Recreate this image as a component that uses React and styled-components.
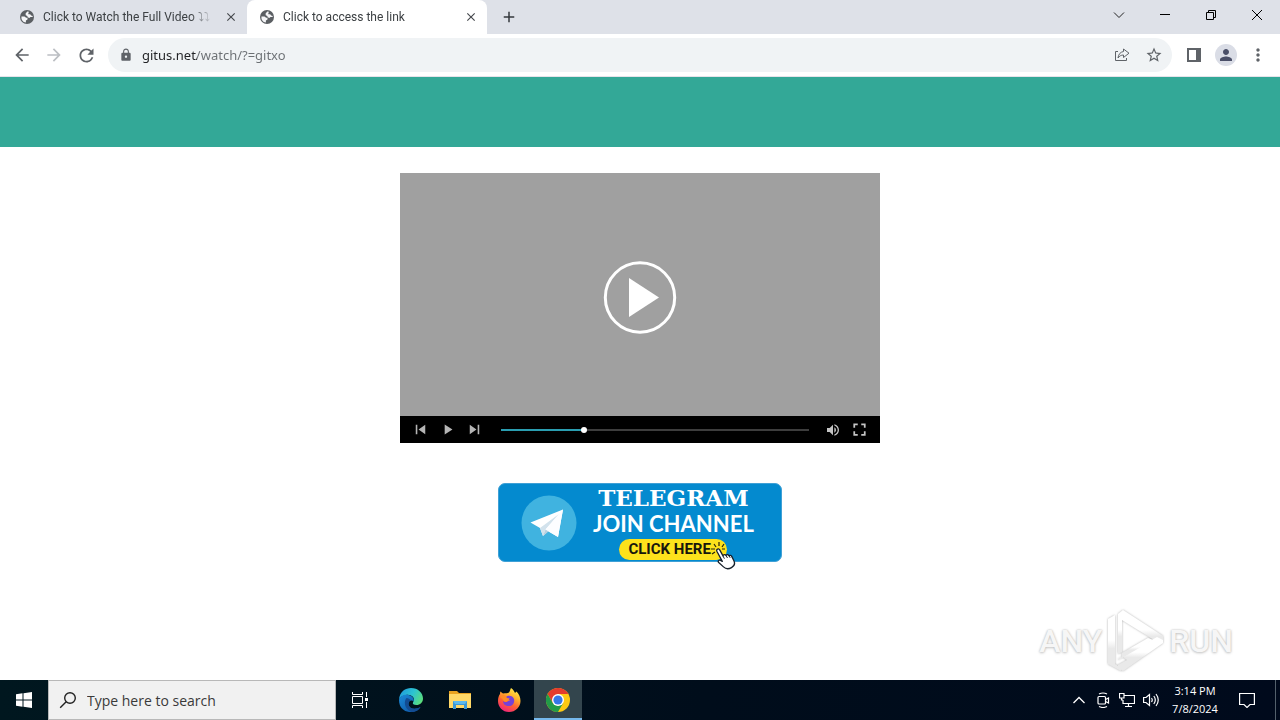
import React, { useState } from "react";
import styled, { createGlobalStyle } from "styled-components";
import {
  MdArrowBack,
  MdArrowForward,
  MdRefresh,
  MdLock,
  MdStarBorder,
  MdMoreVert,
  MdPerson,
  MdClose,
  MdAdd,
  MdSkipPrevious,
  MdSkipNext,
  MdPlayArrow,
  MdVolumeUp,
  MdFullscreen,
} from "react-icons/md";

const GlobalStyle = createGlobalStyle`
  * { box-sizing: border-box; }
  body {
    margin: 0;
    background: #fff;
    font-family: "Noto Sans", "Open Sans", sans-serif;
  }
  button, input { font: inherit; color: inherit; }
  button { padding: 0; border: 0; background: none; cursor: pointer; }
  svg { display: block; flex: none; }
`;

const Desktop = styled.div`
  display: flex;
  flex-direction: column;
  min-height: 100vh;
`;

/* Browser window */
const TabStrip = styled.header`
  display: flex;
  height: 34px;
  padding-left: 7px;
  background: #dee1e8;
`;

const Tab = styled.div`
  display: flex;
  align-items: center;
  gap: 9px;
  flex: 0 1 240px;
  min-width: 0;
  padding: 0 8px 0 13px;
  border-radius: 8px 8px 0 0;
  background: ${(p) => (p.$active ? "#fff" : "transparent")};
  color: #3c4043;
`;

const TabTitle = styled.button`
  flex: 1;
  min-width: 0;
  overflow: hidden;
  white-space: nowrap;
  text-align: left;
  font-family: Roboto, sans-serif;
  font-size: 12px;
  line-height: 18px;
  mask-image: linear-gradient(to right, #000 86%, transparent);
`;

const IconButton = styled.button`
  display: flex;
  align-items: center;
  justify-content: center;
  flex: none;
  width: ${(p) => p.$w || 32}px;
  height: ${(p) => p.$h || 32}px;
  color: ${(p) => p.$color || "#5f6368"};
  background: ${(p) => p.$bg || "transparent"};
`;

const NewTab = styled(IconButton)`
  margin-left: 6px;
`;

const WindowControls = styled.div`
  display: flex;
  margin-left: auto;
`;

const Toolbar = styled.nav`
  display: flex;
  align-items: center;
  padding: 4px 6px;
  border-bottom: 1px solid #e6e3ea;
  background: #fff;
`;

const AddressBar = styled.form`
  display: flex;
  align-items: center;
  flex: 1;
  min-width: 0;
  height: 34px;
  margin: 0 6px;
  padding: 0 2px 0 11px;
  border-radius: 17px;
  background: #f0f3f5;
`;

const AddressInput = styled.input`
  flex: 1;
  min-width: 0;
  margin-left: 9px;
  padding: 0;
  border: 0;
  outline: 0;
  font-size: 13px;
  line-height: 20px;
  color: #202124;
  background: linear-gradient(to right, #202124 55px, #6b6f73 55px);
  background-clip: text;
  -webkit-text-fill-color: transparent;
`;

const Avatar = styled.span`
  display: flex;
  align-items: center;
  justify-content: center;
  width: 22px;
  height: 22px;
  border-radius: 50%;
  background: #dadde6;
  color: #4a4f68;
`;

/* Web page */
const Page = styled.main`
  position: relative;
  flex: 1;
  display: flex;
  flex-direction: column;
  align-items: center;
`;

const Banner = styled.div`
  align-self: stretch;
  height: 70px;
  background: #33a897;
`;

const Player = styled.section`
  width: 480px;
  max-width: 100%;
  margin-top: 26px;
`;

const Screen = styled.button`
  display: flex;
  align-items: center;
  justify-content: center;
  width: 100%;
  height: 243px;
  padding-top: 6px;
  background: #a0a0a0;
`;

const Controls = styled.div`
  display: flex;
  align-items: center;
  height: 27px;
  padding: 0 7px;
  background: #000;
`;

const Seek = styled.input`
  flex: 1;
  min-width: 0;
  height: 8px;
  margin: 0 10px 0 13px;
  appearance: none;
  background: linear-gradient(
      to right,
      #2a9db0 ${(p) => p.value / 10}%,
      #3d3d3d ${(p) => p.value / 10}%
    )
    center / 100% 2px no-repeat;
  &::-webkit-slider-thumb {
    appearance: none;
    width: 6px;
    height: 6px;
    border-radius: 50%;
    background: #fff;
  }
`;

const JoinLink = styled.a`
  position: relative;
  display: flex;
  align-items: center;
  gap: 16px;
  width: 284px;
  height: 79px;
  margin-top: 40px;
  padding-left: 22px;
  border: 1px solid #3fa0d6;
  border-radius: 7px;
  background: #048acf;
  color: #fff;
  text-decoration: none;
`;

const JoinText = styled.span`
  display: flex;
  flex-direction: column;
  align-items: center;
  white-space: nowrap;
`;

const Brand = styled.span`
  font: 700 23px/26px "DejaVu Serif", serif;
`;

const Action = styled.span`
  font: 700 22px/26px Lato, sans-serif;
`;

const Pill = styled.span`
  width: 108px;
  height: 21px;
  margin-top: 2px;
  padding-left: 9px;
  border-radius: 11px;
  background: #fde21c;
  color: #17170c;
  font: 700 15px/21px Roboto, sans-serif;
`;

const Pointer = styled.svg`
  position: absolute;
  right: 44px;
  bottom: -9px;
`;

const Watermark = styled.div`
  position: absolute;
  right: 47px;
  bottom: 7px;
  display: flex;
  align-items: center;
  gap: 4px;
  font: 500 32px/40px Roboto, sans-serif;
  color: #f6f6f6;
  text-shadow: 0 0 2px #bbb, 0 1px 3px #ccc;
`;

/* Taskbar */
const Taskbar = styled.footer`
  display: flex;
  height: 40px;
  background: linear-gradient(to right, #00171f, #000d1b 55%, #000a1c);
  color: #fff;
`;

const SearchBox = styled.label`
  display: flex;
  align-items: center;
  gap: 10px;
  flex: 0 1 288px;
  min-width: 0;
  padding-left: 10px;
  border: 1px solid #b8b8b8;
  background: #f1f1f1;
  color: #222;
`;

const SearchInput = styled.input`
  flex: 1;
  min-width: 0;
  padding: 2px 0 0;
  border: 0;
  outline: 0;
  background: none;
  font-family: "Open Sans", sans-serif;
  font-size: 14px;
  line-height: 20px;
  &::placeholder { color: #3a3a3a; opacity: 1; }
`;

const Apps = styled.div`
  display: flex;
  gap: 1px;
  margin-left: 3px;
`;

const AppButton = styled(IconButton)`
  border-bottom: 2px solid ${(p) => (p.$active ? "#76b9ed" : "transparent")};
  padding-top: 2px;
  background: ${(p) => (p.$active ? "#33454d" : "transparent")};
`;

const Tray = styled.div`
  display: flex;
  margin-left: auto;
  padding-right: 4px;
`;

const Clock = styled.button`
  width: 64px;
  font-family: "Open Sans", sans-serif;
  font-size: 11px;
  line-height: 18px;
  white-space: nowrap;
`;

const ShowDesktop = styled.button`
  height: 40px;
  width: 1px;
  margin-left: 8px;
  background: #53606b;
`;

const Line = ({ size = 16, w = 1, children, ...rest }) => (
  <svg width={size} height={size} viewBox={`0 0 ${size} ${size}`} fill="none" stroke="currentColor" strokeWidth={w} {...rest}>
    {children}
  </svg>
);

const Globe = () => (
  <svg width="14" height="14" viewBox="0 0 14 14" aria-hidden="true">
    <circle cx="7" cy="7" r="7" fill="#5b5f63" />
    <path d="M1.4 6.4h3.1l1.6 1.3h1.4v1.7L5.9 10.5v2.1A5.8 5.8 0 0 1 1.4 6.4Z" fill="#f4f5f7" />
    <path d="M7.3 1.5 5.6 3.6l.1 1.7 1.6.6.4 1.4 1.6.6 1.2-1h2.1l.1-1-1.6-.3-.9-1.4-1.8.1-.1-1 .7-1.6Z" fill="#f4f5f7" />
  </svg>
);

const tabs = ["Click to Watch the Full Video ⤵⤵", "Click to access the link"];

function BrowserTab({ title, active }) {
  return (
    <Tab $active={active}>
      <Globe />
      <TabTitle role="tab" aria-selected={active}>{title}</TabTitle>
      <IconButton $w={16} $h={16} $color="#45484d" aria-label={`Close ${title}`}>
        <MdClose size={14} />
      </IconButton>
    </Tab>
  );
}

const TelegramLogo = () => (
  <svg width="56" height="56" viewBox="0 0 56 56" aria-hidden="true">
    <circle cx="28" cy="28" r="27.5" fill="#40b3e0" />
    <path d="M9.5 27.5 42 14.500 37 42 27 36.200 22 41 19 33Z" fill="#fff" />
    <path d="M19 33 38 19 24.500 34.500 22 41Z" fill="#d2e2ec" />
    <path d="M38 19 24.500 34.500 37 42 42 14.500Z" fill="#fcfdff" />
    <path d="M22 41 24.500 34.500 27.500 36.500Z" fill="#b5cfdf" />
  </svg>
);

const Hand = () => (
  <Pointer width="26" height="28" viewBox="0 0 26 28" aria-hidden="true">
    <path d="M3 2l2 3M8 0v4M13 2l-2 3M0 7h4M1 12l3-2M14 7h-3" stroke="#27220c" strokeWidth="1.200" />
    <path
      d="M6 7.500c1-1 2.100-.6 2.700.4l3.300 6c.5-1.500 2.200-1.600 3-.4.8-1.200 2.400-1 3 .2 1-.8 2.200-.3 2.700.7l2.200 4.300c1.400 3 .3 5.400-2.400 6.900-3.200 1.800-5.800 1.400-8-.7L7.700 20.500c-1.300-1.400.3-3 1.900-2.100l1.700 1L6 9.500c-.4-.8-.5-1.500 0-2Z"
      fill="#fff"
      stroke="#17202a"
      strokeWidth="1.300"
      strokeLinejoin="round"
    />
    <path d="m12 14 1.400 2.700M15 13.500l1.500 2.500M18 13.800l1.200 2" stroke="#17202a" />
  </Pointer>
);

const AnyRunMark = () => (
  <svg width="59" height="64" viewBox="0 0 59 64" aria-hidden="true" overflow="visible">
    <defs>
      <linearGradient id="mark" x2="0" y2="1">
        <stop offset=".45" stopColor="#fff" />
        <stop offset=".6" stopColor="#e9e9e9" />
      </linearGradient>
      <filter id="halo" x="-20%" y="-20%" width="140%" height="140%">
        <feDropShadow dx="0" dy="0" stdDeviation="1.300" floodColor="#999" floodOpacity=".8" />
      </filter>
    </defs>
    <g fill="url(#mark)" filter="url(#halo)">
      <path d="M2 10 9 6v49l6 4v3L2 55Z" />
      <path d="M12 5 17 1 57 27v5l-4 2-37-23v32l-4 2Z" />
      <path d="M12 50 51 28l6 3v3L17 62l-5-3v-3l9-5-4-3-5 3Z" />
      <path d="m16 44 26-15 5 2-31 18Z" />
    </g>
  </svg>
);

const EdgeIcon = () => (
  <svg width="24" height="24" viewBox="0 0 24 24" aria-hidden="true">
    <defs>
      <linearGradient id="edgeTop" x1="0" y1=".3" x2="1" y2=".7">
        <stop stopColor="#209ddb" />
        <stop offset=".5" stopColor="#2cc3d2" />
        <stop offset="1" stopColor="#5ddf78" />
      </linearGradient>
      <linearGradient id="edgeLow" x2="1" y2="1">
        <stop stopColor="#1b8ad8" />
        <stop offset="1" stopColor="#0c4f9e" />
      </linearGradient>
    </defs>
    <path d="M0 12C.5 3.500 6.500 0 12 0c7 0 12 5 12 10.500 0 4-3 6.500-6.500 6.500-3 0-4.200-1.200-3.500-2.500C17.500 9 11 6 7 7 3 7.800.8 9.500 0 12Z" fill="url(#edgeTop)" />
    <path d="M0 12c1-4 5-6 9.500-5C14 8 15.500 11 14.500 13.500 13 11.500 9 13 9.500 16.500c.7 4.500 7 5.500 12 2.500C16 27.500 0 25.500 0 12Z" fill="url(#edgeLow)" />
    <path d="M7.500 10C5 12.500 4.500 20.500 12.500 24 18 24 20 21.500 21.500 19c-5 3-11.300 2-12-2.500-.3-2 .8-3.500 2.500-4.200C10.800 11 9.200 10 7.500 10Z" fill="#134c92" />
  </svg>
);

const FolderIcon = () => (
  <svg width="22" height="20" viewBox="0 0 22 20" aria-hidden="true">
    <path d="M0 1h8l2 2h12v15H0Z" fill="#e9a320" />
    <path d="M0 4h22v14H0Z" fill="#ffd867" />
    <path d="M4 11h14v8h-3v-4H7v4H4Z" fill="#3b97d4" />
    <path d="M4 11h14l-2 3H6Z" fill="#5bb8ec" />
  </svg>
);

const FirefoxIcon = () => (
  <svg width="24" height="24" viewBox="0 0 24 24" aria-hidden="true">
    <defs>
      <linearGradient id="fox" x1=".8" x2=".3" y2="1">
        <stop stopColor="#fff14f" />
        <stop offset=".35" stopColor="#ffb32c" />
        <stop offset=".65" stopColor="#ff5f35" />
        <stop offset="1" stopColor="#f0247c" />
      </linearGradient>
    </defs>
    <path d="M14 0c2.500 1.500 3.500 4 4 5l1.500-1.500C22 6 23.500 9 23.500 13c0 6-5 11-11.500 11S1 19 1 13c0-3 .8-5.500 2-7l.3-2.500L6 5.500C8.500 5 11 5.500 12 4.500c1-1 1-3 2-4.500Z" fill="url(#fox)" />
    <path d="M9 9c2-2 6-1.500 7.500 1 2 3.500-.5 8-4.500 8-3.500 0-6-2-6-5 1 1 3 1.500 4.500.5 1-.7 2-.8 2.500-1.500-1 0-2.500 0-3-.7L9 9Z" fill="#7641d8" />
    <path d="M6 7c2 0 3 1 3 2 1 1.500 2.500 1 3.500 1.500 0 1.500-2 1.500-2.500 3-2 .5-4-.5-4.500-2.500L3 9Z" fill="#ff8c24" />
  </svg>
);

const ChromeIcon = () => (
  <svg width="24" height="24" viewBox="0 0 24 24" aria-hidden="true">
    <circle cx="12" cy="12" r="12" fill="#fdc914" />
    <path d="M1.600 6A12 12 0 0 1 22.400 6H12l-5.200 9Z" fill="#e33b2e" />
    <path d="M1.600 6 6.800 15 12 18l5.200-3L12 24A12 12 0 0 1 1.600 6Z" fill="#229b48" />
    <circle cx="12" cy="12" r="6" fill="#fff" />
    <circle cx="12" cy="12" r="4.600" fill="#3477e8" />
  </svg>
);

export default function App() {
  const [position, setPosition] = useState(266);
  const [url, setUrl] = useState("gitus.net/watch/?=gitxo");

  return (
    <Desktop>
      <GlobalStyle />
      <TabStrip>
        {tabs.map((title, i) => (
          <BrowserTab key={title} title={title} active={i === 1} />
        ))}
        <NewTab $h={34} $color="#35383c" aria-label="New tab"><MdAdd size={18} /></NewTab>
        <WindowControls>
          <IconButton $w={46} $h={29} $color="#222" aria-label="Search tabs">
            <Line size={12}><path d="m1 3.500 5 5 5-5" /></Line>
          </IconButton>
          <IconButton $w={46} $h={29} $color="#000" aria-label="Minimize">
            <Line size={10}><path d="M0 4.500h10" /></Line>
          </IconButton>
          <IconButton $w={46} $h={29} $color="#000" aria-label="Restore">
            <Line size={10}><path d="M.5 2.500h7v7h-7ZM2.500 2.500v-2h7v7h-2" /></Line>
          </IconButton>
          <IconButton $w={46} $h={29} $color="#000" aria-label="Close window">
            <Line size={10}><path d="m0 0 10 10M10 0 0 10" /></Line>
          </IconButton>
        </WindowControls>
      </TabStrip>

      <Toolbar aria-label="Browser toolbar">
        <IconButton aria-label="Back"><MdArrowBack size={20} /></IconButton>
        <IconButton $color="#bcbfc3" aria-label="Forward"><MdArrowForward size={20} /></IconButton>
        <IconButton aria-label="Reload"><MdRefresh size={21} /></IconButton>
        <AddressBar onSubmit={(e) => e.preventDefault()}>
          <MdLock size={14} color="#5f6368" />
          <AddressInput aria-label="Address" value={url} onChange={(e) => setUrl(e.target.value)} />
          <IconButton type="button" aria-label="Share">
            <Line size={16}>
              <path d="M4 4.500H1.500v9h11V11" />
              <path d="M9.500 2 15 6.200 9.500 10.500V8C7 8 5.500 9 4 11c.4-3.600 2.300-6 5.500-6.500Z" strokeLinejoin="round" />
            </Line>
          </IconButton>
          <IconButton type="button" aria-label="Bookmark"><MdStarBorder size={18} /></IconButton>
        </AddressBar>
        <IconButton aria-label="Side panel">
          <Line size={14} w={2}><path d="M1 1h12v12H1Z" /><path d="M9 1h4v12H9Z" fill="currentColor" stroke="none" /></Line>
        </IconButton>
        <IconButton aria-label="Profile"><Avatar><MdPerson size={18} /></Avatar></IconButton>
        <IconButton aria-label="Menu"><MdMoreVert size={20} /></IconButton>
      </Toolbar>

      <Page>
        <Banner />
        <Player aria-label="Video player">
          <Screen aria-label="Play video">
            <svg width="74" height="74" viewBox="0 0 74 74">
              <circle cx="37" cy="36.500" r="34.700" fill="none" stroke="#fff" strokeWidth="3" />
              <path d="M26 17v39L56 36.500Z" fill="#fff" />
            </svg>
          </Screen>
          <Controls>
            <IconButton $w={27} $h={27} $color="#b5b5b5" aria-label="Previous"><MdSkipPrevious size={19} /></IconButton>
            <IconButton $w={27} $h={27} $color="#b5b5b5" aria-label="Play"><MdPlayArrow size={17} /></IconButton>
            <IconButton $w={27} $h={27} $color="#b5b5b5" aria-label="Next"><MdSkipNext size={19} /></IconButton>
            <Seek
              type="range"
              min="0"
              max="1000"
              aria-label="Position"
              value={position}
              onChange={(e) => setPosition(Number(e.target.value))}
            />
            <IconButton $w={27} $h={27} $color="#c4c4c4" aria-label="Volume"><MdVolumeUp size={16} /></IconButton>
            <IconButton $w={27} $h={27} $color="#c4c4c4" aria-label="Full screen"><MdFullscreen size={21} /></IconButton>
          </Controls>
        </Player>

        <JoinLink href="#join">
          <TelegramLogo />
          <JoinText>
            <Brand>TELEGRAM</Brand>
            <Action>JOIN CHANNEL</Action>
            <Pill>CLICK HERE</Pill>
          </JoinText>
          <Hand />
        </JoinLink>

        <Watermark>
          <span>ANY</span>
          <AnyRunMark />
          <span>RUN</span>
        </Watermark>
      </Page>

      <Taskbar>
        <IconButton $w={48} $h={40} $color="#fff" aria-label="Start">
          <svg width="16" height="16" viewBox="0 0 16 16" fill="currentColor">
            <path d="M0 2.200 6.500 1.300v6.200H0ZM7.500 1.200 16 0v7.500H7.500ZM0 8.500h6.500v6.200L0 13.800ZM7.500 8.500H16V16l-8.500-1.200Z" />
          </svg>
        </IconButton>
        <SearchBox>
          <Line size={18} w={1.4}><circle cx="11" cy="7" r="5.300" /><path d="m7.200 10.800-6 6" /></Line>
          <SearchInput type="text" placeholder="Type here to search" aria-label="Type here to search" />
        </SearchBox>
        <IconButton $w={48} $h={40} $color="#fff" aria-label="Task view">
          <Line size={18}>
            <path d="M1.500 1v2.500h10V1M1.500 17v-2.500h10V17M1.500 5.500h10v7h-10ZM15.500 1v5M15.500 11v6" />
            <path d="M14 7h3v3h-3Z" fill="currentColor" stroke="none" />
          </Line>
        </IconButton>
        <Apps>
          <AppButton $w={48} $h={40} aria-label="Edge"><EdgeIcon /></AppButton>
          <AppButton $w={48} $h={40} aria-label="File Explorer"><FolderIcon /></AppButton>
          <AppButton $w={48} $h={40} aria-label="Firefox"><FirefoxIcon /></AppButton>
          <AppButton $w={48} $h={40} $active aria-label="Chrome"><ChromeIcon /></AppButton>
        </Apps>
        <Tray>
          <IconButton $w={24} $h={40} $color="#fff" aria-label="Show hidden icons">
            <Line size={12} w={1.3}><path d="m.500 9 5.500-5.500L11.500 9" /></Line>
          </IconButton>
          <IconButton $w={24} $h={40} $color="#fff" aria-label="Meet now">
            <Line size={16} w={1.2}>
              <rect x="3" y="4.500" width="7.500" height="7.500" rx="1" />
              <path d="m10.500 7.500 3-1.500v5l-3-1.500M4 2q4-2 8 0M4 14.500q4 2 8 0" />
            </Line>
          </IconButton>
          <IconButton $w={24} $h={40} $color="#fff" aria-label="Network">
            <Line size={16} w={1.2}>
              <path d="M5 3.500h10.500v8H4V8M9.500 11.500v3M6 14.500h7M.500 1.500H5V6H.500ZM2.500 6v2H4" />
            </Line>
          </IconButton>
          <IconButton $w={24} $h={40} $color="#fff" aria-label="Sound">
            <Line size={16} w={1.2}>
              <path d="M.600 5.500H3l3.500-3v11L3 10.500H.600ZM8.500 6q1.500 2 0 4M10.800 4q3 4 0 8M13 2q4.500 6 0 12" />
            </Line>
          </IconButton>
          <Clock>3:14 PM<br />7/8/2024</Clock>
          <IconButton $w={40} $h={40} $color="#fff" aria-label="Notifications">
            <Line size={16} w={1.2}><path d="M.600 1.500h14.800v11H11l-3 3-3-3H.600Z" /></Line>
          </IconButton>
          <ShowDesktop aria-label="Show desktop" />
        </Tray>
      </Taskbar>
    </Desktop>
  );
}
